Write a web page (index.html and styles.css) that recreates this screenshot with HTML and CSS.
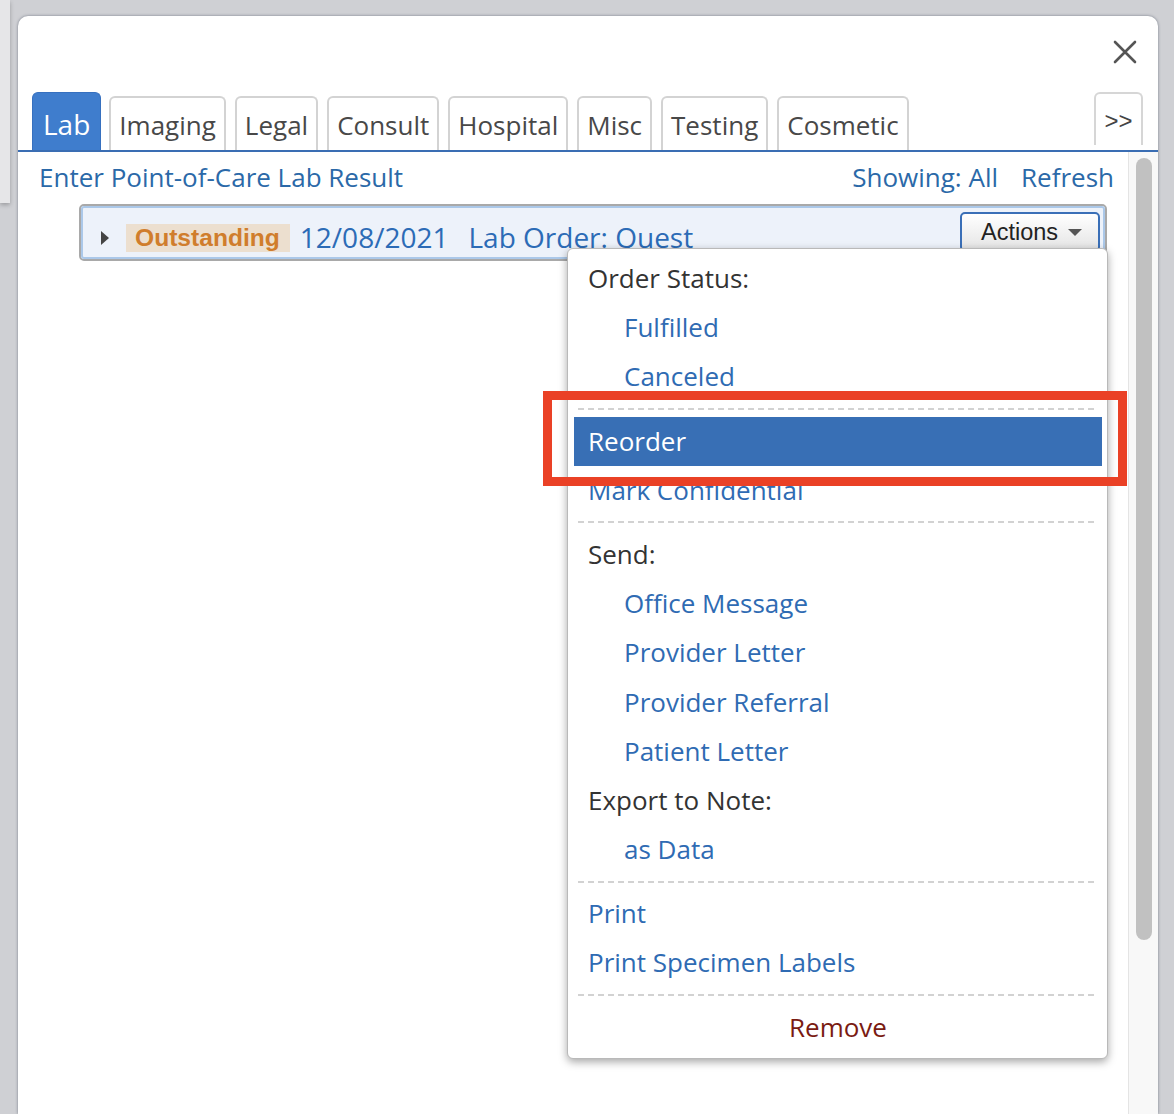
FILE: index.html
```html
<!DOCTYPE html>
<html lang="en">
<head>
<meta charset="utf-8">
<title>Lab Orders</title>
<link rel="stylesheet" href="styles.css">
</head>
<body>
<div class="under"></div>
<div class="dialog">
  <div class="dlg-head">
    <svg class="close" width="24" height="24" viewBox="0 0 24 24" aria-label="Close">
      <path d="M2 2 L22 22 M22 2 L2 22" stroke="#555" stroke-width="2.6" stroke-linecap="round" fill="none"/>
    </svg>
  </div>
  <div class="tabs">
    <div class="tab active">Lab</div>
    <div class="tab">Imaging</div>
    <div class="tab">Legal</div>
    <div class="tab">Consult</div>
    <div class="tab">Hospital</div>
    <div class="tab">Misc</div>
    <div class="tab">Testing</div>
    <div class="tab">Cosmetic</div>
    <div class="more">&gt;&gt;</div>
  </div>
  <div class="content">
    <div class="main">
      <div class="toolbar">
        <a class="link">Enter Point-of-Care Lab Result</a>
        <div class="tools">
          <a class="link">Showing: All</a>
          <a class="link">Refresh</a>
        </div>
      </div>
      <div class="order">
        <div class="order-inner">
          <span class="expander"></span>
          <span class="status">Outstanding</span>
          <span class="date">12/08/2021</span>
          <span class="title">Lab Order: Quest</span>
          <button class="actions">Actions<span class="caret"></span></button>
        </div>
      </div>
    </div>
    <div class="scroll"><div class="thumb"></div></div>
  </div>

  <div class="menu">
    <div class="mi head">Order Status:</div>
    <div class="mi sub">Fulfilled</div>
    <div class="mi sub">Canceled</div>
    <div class="sep"></div>
    <div class="mi selected">Reorder</div>
    <div class="mi">Mark Confidential</div>
    <div class="sep"></div>
    <div class="mi head">Send:</div>
    <div class="mi sub">Office Message</div>
    <div class="mi sub">Provider Letter</div>
    <div class="mi sub">Provider Referral</div>
    <div class="mi sub">Patient Letter</div>
    <div class="mi head">Export to Note:</div>
    <div class="mi sub">as Data</div>
    <div class="sep"></div>
    <div class="mi">Print</div>
    <div class="mi">Print Specimen Labels</div>
    <div class="sep"></div>
    <div class="mi remove">Remove</div>
  </div>
  <div class="callout"></div>
</div>
</body>
</html>
```

FILE: styles.css
```css
* { box-sizing: border-box; }

html, body {
  margin: 0;
  height: 1114px;
  overflow: hidden;
}

body {
  background: #cfd0d4;
  padding: 16px 16px 0 18px;
  font-family: "Open Sans", "Noto Sans", sans-serif;
  position: relative;
}

.under {
  position: absolute;
  left: 0;
  top: 0;
  width: 10px;
  height: 203px;
  background: #e6e6e8;
  box-shadow: 0 2px 4px rgba(0, 0, 0, 0.25);
}

.dialog {
  position: relative;
  width: 1140px;
  height: 1098px;
  background: #fff;
  border-radius: 10px 10px 0 0;
  box-shadow: 0 0 3px rgba(40, 50, 70, 0.55);
  overflow: hidden;
}

.dlg-head {
  height: 76px;
  display: flex;
  justify-content: flex-end;
  align-items: flex-start;
  padding: 24px 21px 0 0;
}

.close { display: block; }

/* tabs */
.tabs {
  display: flex;
  align-items: flex-end;
  gap: 9px;
  height: 60px;
  padding: 0 15px 0 14px;
  border-bottom: 2px solid #3a6db3;
}

.tab {
  height: 54px;
  border: 2px solid #d3d3d3;
  border-bottom: 0;
  border-radius: 6px 6px 0 0;
  padding: 2px 8px 0;
  line-height: 50px;
  font-size: 26px;
  color: #484848;
  white-space: nowrap;
}

.tab.active {
  height: 58px;
  border: 1px solid #3670bf;
  border-bottom: 0;
  background: #3f7dcd;
  color: #fff;
  font-size: 28px;
  padding: 5px 10px 0;
  line-height: 52px;
  margin-right: -1px;
}

.more {
  margin-left: auto;
  align-self: flex-end;
  margin-bottom: 5px;
  width: 49px;
  height: 53px;
  border: 2px solid #d6d6d6;
  border-bottom: 0;
  border-radius: 6px 6px 0 0;
  padding-top: 3px;
  text-align: center;
  font-family: "Liberation Sans", Arial, sans-serif;
  font-size: 24px;
  line-height: 48px;
  color: #444;
}

/* content */
.content {
  display: flex;
  height: 962px;
}

.main {
  flex: 1;
  min-width: 0;
}

.toolbar {
  display: flex;
  justify-content: space-between;
  padding: 7px 14px 0 21px;
  line-height: 36px;
  font-size: 26px;
}

.tools {
  display: flex;
  gap: 23px;
}

.link {
  color: #2b69a8;
  text-decoration: none;
  white-space: nowrap;
}

.order {
  margin: 9px 21px 0 61px;
  border: 2px solid #a9a9a9;
  border-radius: 5px;
}

.order-inner {
  height: 53px;
  display: flex;
  align-items: flex-start;
  border: 2px solid #abc8e9;
  border-radius: 3px;
  background: #edf2fa;
  padding: 0 0 0 18px;
}

.expander {
  margin-top: 23px;
  width: 0;
  height: 0;
  border-left: 8px solid #444;
  border-top: 7px solid transparent;
  border-bottom: 7px solid transparent;
}

.status {
  margin: 16px 0 0 17px;
  background: #ecdfcf;
  color: #d07d2c;
  font-family: "Liberation Sans", Arial, sans-serif;
  font-weight: bold;
  font-size: 24.6px;
  line-height: 28px;
  padding: 0 10px 0 9px;
}

.date,
.title {
  margin-top: 15px;
  font-size: 28px;
  line-height: 28px;
  color: #2c6bb6;
  white-space: nowrap;
}

.date { margin-left: 10px; }
.title { margin-left: 20px; }

.actions {
  margin: 4px 3px 0 auto;
  width: 140px;
  height: 40px;
  flex-shrink: 0;
  display: flex;
  align-items: center;
  border: 2px solid #3a6fb7;
  border-radius: 5px;
  background: linear-gradient(#ffffff, #e4e4e4);
  padding: 0 0 0 19px;
  font-family: "Liberation Sans", Arial, sans-serif;
  font-size: 23.5px;
  color: #222;
}

.caret {
  margin-left: 10px;
  width: 0;
  height: 0;
  border-top: 7px solid #555;
  border-left: 7.5px solid transparent;
  border-right: 7.5px solid transparent;
}

/* scrollbar */
.scroll {
  width: 30px;
  background: #f8f8f8;
  border-left: 1px solid #e4e4e4;
  padding: 6px 6px 0 7px;
}

.thumb {
  height: 782px;
  background: #c1c1c1;
  border-radius: 8px;
}

/* dropdown menu */
.menu {
  position: absolute;
  left: 549px;
  top: 232px;
  width: 541px;
  background: #fff;
  border: 1px solid #b9b9b9;
  border-radius: 6px;
  box-shadow: 0 3px 8px rgba(0, 0, 0, 0.35);
  padding: 5px 5px 6px 6px;
  font-size: 26px;
  z-index: 5;
}

.mi {
  line-height: 49.2px;
  height: 49.2px;
  padding-left: 14px;
  color: #2f6bb3;
  white-space: nowrap;
}

.mi.head { color: #333; }
.mi.sub { padding-left: 50px; }

.mi.selected {
  background: #386fb5;
  color: #fff;
}

.mi.remove {
  padding-left: 0;
  text-align: center;
  color: #7a1b12;
}

.sep {
  height: 2px;
  margin: 6.5px 4px;
  background: repeating-linear-gradient(to right, #d2d2d2 0 6px, transparent 6px 10px);
}

/* annotation */
.callout {
  position: absolute;
  left: 525px;
  top: 375px;
  width: 584px;
  height: 95px;
  border: 9px solid #ea4126;
  z-index: 6;
}
```
